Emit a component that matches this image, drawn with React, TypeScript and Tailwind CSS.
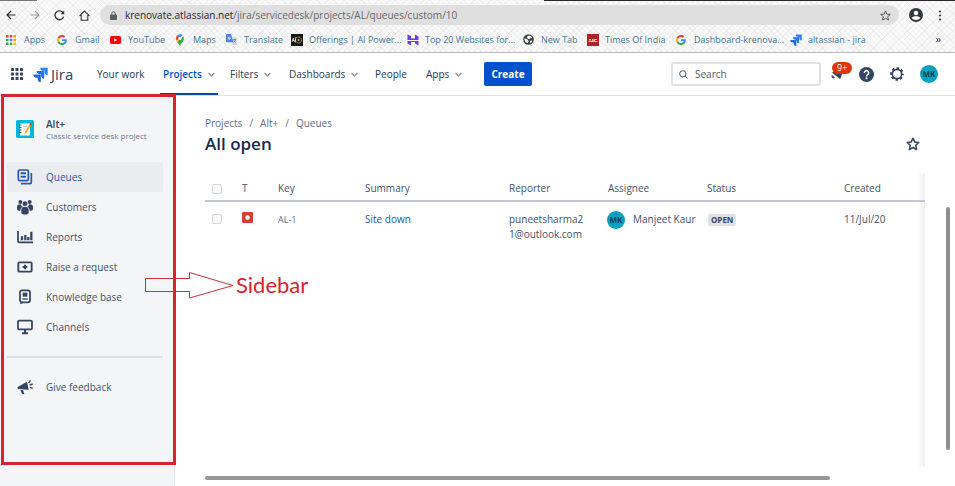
import type { ReactNode } from "react";

function GoogleIcon() {
  return (
    <svg viewBox="0 0 48 48" className="size-[10px] shrink-0" aria-hidden="true">
      <path fill="#ea4335" d="M24 9.500c3.500 0 6.700 1.200 9.200 3.600l6.900-6.900C35.900 2.400 30.500 0 24 0 14.600 0 6.500 5.400 2.600 13.200l8 6.200C12.400 13.700 17.700 9.500 24 9.500z" />
      <path fill="#4285f4" d="M47 24.600c0-1.600-.2-3.100-.4-4.600H24v9h12.900c-.6 3-2.300 5.500-4.800 7.200l7.700 6C44.400 38 47 31.800 47 24.600z" />
      <path fill="#fbbc05" d="M10.500 28.600a14.500 14.500 0 0 1 0-9.200l-8-6.200a24 24 0 0 0 0 21.600z" />
      <path fill="#34a853" d="M24 48c6.500 0 11.900-2.100 15.900-5.800l-7.700-6c-2.200 1.500-4.900 2.300-8.200 2.300-6.300 0-11.600-4.200-13.500-9.900l-8 6.200C6.500 42.600 14.600 48 24 48z" />
    </svg>
  );
}

function JiraMark({ className }: { className: string }) {
  return (
    <svg viewBox="0 0 24 24" className={className} aria-hidden="true">
      <path fill="#2684ff" d="M23 1H11.500a5 5 0 0 0 5 5h2v2a5 5 0 0 0 5 5V1z" />
      <path fill="#2171ea" d="M17.500 6.500H6a5 5 0 0 0 5 5h2v2a5 5 0 0 0 5 5V6.500z" />
      <path fill="#1f68dd" d="M12 12H.5a5 5 0 0 0 5 5h2v2a5 5 0 0 0 5 5V12z" />
    </svg>
  );
}

const appColors = ["#ea4335", "#ea4335", "#f29900", "#34a853", "#4285f4", "#f29900", "#34a853", "#34a853", "#fbbc05"];

function DotGrid({ colors, className }: { colors: string[]; className: string }) {
  return (
    <svg viewBox="0 0 12 12" className={className} aria-hidden="true">
      {colors.map((c, i) => (
        <rect key={i} x={(i % 3) * 4.5} y={Math.floor(i / 3) * 4.5} width="3" height="3" rx="0.6" fill={c} />
      ))}
    </svg>
  );
}

const bookmarks: { label: string; width: string; icon: ReactNode }[] = [
  { label: "Apps", width: "w-[51px]", icon: <DotGrid colors={appColors} className="size-[10px] shrink-0" /> },
  { label: "Gmail", width: "w-[53px]", icon: <GoogleIcon /> },
  {
    label: "YouTube",
    width: "w-[65px]",
    icon: (
      <svg viewBox="0 0 22 16" className="h-2 w-[11px] shrink-0" aria-hidden="true">
        <rect width="22" height="16" rx="3.5" fill="#f00" />
        <path d="M8.500 4.500v7l6-3.500z" fill="#fff" />
      </svg>
    ),
  },
  {
    label: "Maps",
    width: "w-[51px]",
    icon: (
      <svg viewBox="0 0 20 26" className="h-3 w-[10px] shrink-0" aria-hidden="true">
        <path d="M10 26C9 20 2 16 1.500 9.500L10 9z" fill="#fbbc04" />
        <path d="M10 26c1-6 8.500-9 8.500-16.500L17 5 4 18c3 3 5 4 6 8z" fill="#34a853" />
        <path d="M10 .5a9 9 0 0 0-7 3.300l6 5.700 7-8A9 9 0 0 0 10 .5z" fill="#4285f4" />
        <path d="M3 3.800A9 9 0 0 0 2.500 14L9 8.500z" fill="#ea4335" />
        <circle cx="10" cy="9.5" r="3.5" fill="#fff" />
      </svg>
    ),
  },
  {
    label: "Translate",
    width: "w-[65px]",
    icon: (
      <svg viewBox="0 0 24 24" className="size-[11px] shrink-0" aria-hidden="true">
        <path d="M10 7h12a2 2 0 0 1 2 2v13a2 2 0 0 1-2 2h-8z" fill="#d5d9df" />
        <path d="M2 0h9l5 18H2a2 2 0 0 1-2-2V2a2 2 0 0 1 2-2z" fill="#4a84e8" />
        <path d="M11 9H7.500v1.600H9.200A2.600 2.600 0 1 1 8.800 7" fill="none" stroke="#fff" strokeWidth="1.5" />
        <path d="M15 12h7M18.500 10.500V12M21 12c-.5 3-3 5.500-5 6.500M16.500 13.500c1 2.500 3 4 5 5" fill="none" stroke="#5a6f91" strokeWidth="1.4" />
      </svg>
    ),
  },
  {
    label: "Offerings | AI Power...",
    width: "w-[116px]",
    icon: (
      <svg viewBox="0 0 24 24" className="size-3 shrink-0" aria-hidden="true">
        <rect width="24" height="24" fill="#171412" />
        <circle cx="15" cy="12" r="6" fill="none" stroke="#d8c9a0" strokeWidth="2" strokeDasharray="3 1.5" />
        <circle cx="15" cy="12" r="2" fill="#e6cf8c" />
        <path d="M2 16l2.500-8L7 16M3 13h4M9 7v10" stroke="#e9e4da" strokeWidth="1.6" fill="none" />
      </svg>
    ),
  },
  {
    label: "Top 20 Websites for...",
    width: "w-[116px]",
    icon: (
      <svg viewBox="0 0 24 24" className="size-3 shrink-0" aria-hidden="true">
        <path d="M1 1l7 3v5h8V1l7 4v7H1zM1 14h22v9l-7-4v-3H8v7l-7-4z" fill="#673de6" />
      </svg>
    ),
  },
  {
    label: "New Tab",
    width: "w-16",
    icon: (
      <svg viewBox="0 0 24 24" className="size-[11px] shrink-0" aria-hidden="true">
        <circle cx="12" cy="12" r="11.5" fill="#3c4043" />
        <path d="M3 10c3-1 6 1 8 3s1 4-1 7c-4-1-7-5-7-10zM12 3c4 0 7 2 8 5-2 1-4 0-5 2s-5 0-6-2 1-4 3-5zM15 15l5-1c0 3-2 5-4 6z" fill="#fff" />
      </svg>
    ),
  },
  {
    label: "Times Of India",
    width: "w-[89px]",
    icon: (
      <svg viewBox="0 0 24 24" className="size-3 shrink-0" aria-hidden="true">
        <rect width="24" height="24" fill="#b3201d" />
        <path d="M3 15h18M4 11h4M6 11v4M10 15l1.500-5 1.500 5M15 15v-4h5" stroke="#f9dcd9" strokeWidth="1.8" fill="none" />
      </svg>
    ),
  },
  { label: "Dashboard-krenova...", width: "w-[114px]", icon: <GoogleIcon /> },
  { label: "altassian - jira", width: "w-[90px]", icon: <JiraMark className="size-3 shrink-0" /> },
];

function BrowserBar() {
  return (
    <div className="border-b border-[#b9b9b9] bg-[#fafafa] bg-[repeating-linear-gradient(45deg,#0000000a_0_1px,transparent_1px_4px),repeating-linear-gradient(-45deg,#0000000a_0_1px,transparent_1px_4px)]">
      <div className="flex h-px justify-between">
        <span className="w-[37px] bg-[#777]" />
        <span className="w-[43%] bg-[#2b2527]" />
      </div>
      <div className="flex h-7 items-center pr-2 pl-[6px]">
        <div className="flex w-[94px] items-center gap-[14px] text-[#2f3235]">
          <button aria-label="Back">
            <svg viewBox="0 0 20 20" className="size-[10px]" fill="none" stroke="currentColor" strokeWidth="2.4"><path d="M19 10H2M10 2l-8 8 8 8" /></svg>
          </button>
          <button aria-label="Forward" className="text-[#9b9b9b]">
            <svg viewBox="0 0 20 20" className="size-[10px]" fill="none" stroke="currentColor" strokeWidth="2.2"><path d="M1 10h17M10 2l8 8-8 8" /></svg>
          </button>
          <button aria-label="Reload">
            <svg viewBox="0 0 20 20" className="size-[11px]" fill="none" stroke="currentColor" strokeWidth="2.4"><path d="M17.500 12A8 8 0 1 1 16 4.500l1.500 2" /><path d="M18.500 1v6.500H12z" fill="currentColor" stroke="none" /></svg>
          </button>
          <button aria-label="Home">
            <svg viewBox="0 0 20 20" className="size-[11px]" fill="none" stroke="currentColor" strokeWidth="2"><path d="M1 10.500L10 2l9 8.500M4 9v9.500h12V9" /></svg>
          </button>
        </div>
        <div className="flex h-5 flex-1 items-center rounded-full bg-[#dfdfe0] pr-2 pl-[10px]">
          <svg viewBox="0 0 14 18" className="h-[9px] w-[7px]" aria-hidden="true">
            <rect y="7" width="14" height="11" rx="1.5" fill="#5c5f62" />
            <path d="M3.500 8V5a3.500 3.500 0 0 1 7 0v3" fill="none" stroke="#5c5f62" strokeWidth="2" />
          </svg>
          <span className="ml-2 flex-1 text-[10px] text-[#65686c]">
            <span className="text-[#25282c]">krenovate.atlassian.net</span>/jira/servicedesk/projects/AL/queues/custom/10
          </span>
          <button aria-label="Bookmark this page">
            <svg viewBox="0 0 24 24" className="size-[11px]" fill="none" stroke="#4a4d50" strokeWidth="2"><path d="M12 2l3 7 7.500.6-5.700 5 1.800 7.400-6.600-4-6.600 4 1.800-7.400-5.700-5L9 9z" /></svg>
          </button>
        </div>
        <button aria-label="Profile" className="ml-[10px]">
          <svg viewBox="0 0 24 24" className="size-[14px]"><circle cx="12" cy="12" r="12" fill="#37393c" /><circle cx="12" cy="8.5" r="3.8" fill="#fff" /><path d="M4.500 17c2-4 13-4 15 0-3 4.500-12 4.500-15 0z" fill="#fff" /></svg>
        </button>
        <button aria-label="Menu" className="ml-[10px]">
          <svg viewBox="0 0 14 22" className="h-[11px] w-[14px]" fill="#37393c"><circle cx="7" cy="3" r="2.2" /><circle cx="7" cy="11" r="2.2" /><circle cx="7" cy="19" r="2.2" /></svg>
        </button>
      </div>
      <div className="flex h-[23px] items-center pb-[2px] pl-[6px] text-[9px] text-[#3d7898]">
        {bookmarks.map((b) => (
          <a key={b.label} href="#" className={`flex shrink-0 items-center whitespace-nowrap ${b.width}`}>
            <span className="flex w-[18px] shrink-0">{b.icon}</span>
            {b.label}
          </a>
        ))}
        <button aria-label="More bookmarks" className="mr-[14px] ml-auto text-[11px] text-[#333]">»</button>
      </div>
    </div>
  );
}

function Chevron() {
  return (
    <svg viewBox="0 0 12 8" className="ml-[6px] h-[5px] w-[7px]" fill="none" stroke="#8a909c" strokeWidth="2.4" aria-hidden="true">
      <path d="M1 1.500l5 5 5-5" />
    </svg>
  );
}

const navItems = [
  { label: "Your work", width: "w-[66px]", menu: false },
  { label: "Projects", width: "w-[67px]", menu: true },
  { label: "Filters", width: "w-[59px]", menu: true },
  { label: "Dashboards", width: "w-[86px]", menu: true },
  { label: "People", width: "w-[51px]", menu: false },
  { label: "Apps", width: "w-[58px]", menu: true },
];

const gridColors = Array<string>(9).fill("#344563");

function Header() {
  return (
    <header className="flex h-[43px] shrink-0 items-center border-b border-[#dcdee2] pr-[17px] pl-[11px]">
      <button aria-label="Switch to" className="shrink-0"><DotGrid colors={gridColors} className="size-3" /></button>
      <a href="#" className="ml-[10px] flex w-[64px] shrink-0 items-center text-[15px] leading-5 text-[#344563]">
        <JiraMark className="mr-[3px] size-[15px]" />
        Jira
      </a>
      <nav className="flex self-stretch text-[10px] font-medium text-[#253858]">
        {navItems.map((n) => (
          <a key={n.label} href="#" className={`flex shrink-0 whitespace-nowrap ${n.width}`}>
            <span className={`flex items-center border-y-2 border-transparent ${n.label === "Projects" ? "-mx-[3px] border-b-[#0747a6] px-[3px] font-semibold text-[#0052cc]" : ""}`}>
              {n.label}
              {n.menu && <Chevron />}
            </span>
          </a>
        ))}
      </nav>
      <button className="h-6 w-12 shrink-0 rounded-[2px] bg-[#0052cc] text-[10px] font-bold text-white">Create</button>
      <label className="mr-[10px] ml-auto flex h-6 w-[150px] items-center rounded-[3px] border-2 border-[#dfe1e6] px-[6px]">
        <svg viewBox="0 0 20 20" className="size-[9px] shrink-0" fill="none" stroke="#42526e" strokeWidth="2.2" aria-hidden="true"><circle cx="8.5" cy="8.5" r="7" /><path d="M13.500 13.500L19 19" /></svg>
        <input aria-label="Search" placeholder="Search" className="ml-[7px] w-full min-w-0 text-[10px] outline-none placeholder:text-[#505b6b]" />
      </label>
      <button aria-label="Notifications, 9 or more" className="relative flex h-6 w-7 items-center">
        <svg viewBox="0 0 24 24" className="size-3" fill="#344563"><path d="M14 2l9 9c-3 3-1 6-5 11L2 9c5-4 8-3 12-7z" /><path d="M2 14l6 5a3.500 3.500 0 0 1-6-5z" /></svg>
        <span className="absolute top-0 left-px rounded-full bg-[#de350b] px-[5px] text-[9px] leading-3 text-white">9+</span>
      </button>
      <button aria-label="Help">
        <svg viewBox="0 0 24 24" className="size-[15px]"><circle cx="12" cy="12" r="12" fill="#344563" /><path d="M8.500 9.500a3.500 3.500 0 1 1 5.500 2.700c-1.300.9-2 1.300-2 2.800" fill="none" stroke="#fff" strokeWidth="2.4" /><circle cx="12" cy="18" r="1.5" fill="#fff" /></svg>
      </button>
      <button aria-label="Settings" className="ml-4">
        <svg viewBox="0 0 24 24" className="size-[14px]" fill="none" stroke="#344563"><circle cx="12" cy="12" r="8" strokeWidth="2.8" /><circle cx="12" cy="12" r="10.2" strokeWidth="3" strokeDasharray="4.4 3.61" strokeDashoffset="2.2" /></svg>
      </button>
      <button aria-label="Your profile" className="ml-4 size-[18px] rounded-full bg-[#00a3bf] text-[8px] font-bold text-[#123e57]">MK</button>
    </header>
  );
}

const sideItems: { label: string; icon: ReactNode }[] = [
  {
    label: "Queues",
    icon: (
      <>
        <rect x="2" y="1.5" width="15" height="16" rx="2" fill="none" stroke="currentColor" strokeWidth="2.6" />
        <path d="M5.500 6.500h8M5.500 11.500h8" stroke="currentColor" strokeWidth="3" />
        <path d="M21.500 6v14a2 2 0 0 1-2 2H6" fill="none" stroke="currentColor" strokeWidth="2.6" />
      </>
    ),
  },
  {
    label: "Customers",
    icon: (
      <g fill="currentColor">
        <circle cx="5" cy="4.5" r="3" /><circle cx="19" cy="4.5" r="3" /><circle cx="12" cy="7" r="3.6" />
        <path d="M0 12c0-3 2-4 5-4 1.500 1 1.500 3 3.500 4C5.500 13.500 5 15 5 18 2 18 0 17 0 15zM24 12c0-3-2-4-5-4-1.500 1-1.500 3-3.500 4 3 1.500 3.500 3 3.500 6 3 0 5-1 5-3z" />
        <path d="M6.500 16c0-3 2.500-4.500 5.500-4.500s5.500 1.500 5.500 4.500v5c-1.500 3-9.500 3-11 0z" />
      </g>
    ),
  },
  {
    label: "Reports",
    icon: (
      <>
        <path d="M1.500 3v15a2 2 0 0 0 2 2H24" fill="none" stroke="currentColor" strokeWidth="2.6" />
        <path d="M7.500 11v6M12.500 9v8M17 12v5M21.500 4v13" stroke="currentColor" strokeWidth="3.4" />
      </>
    ),
  },
  {
    label: "Raise a request",
    icon: (
      <>
        <rect x="2" y="5" width="20" height="14" rx="1.5" fill="none" stroke="currentColor" strokeWidth="2.8" />
        <path d="M12 8.500v7M8.500 12h7" stroke="currentColor" strokeWidth="3" />
      </>
    ),
  },
  {
    label: "Knowledge base",
    icon: (
      <>
        <rect x="4.5" y="2" width="15" height="18" rx="3" fill="none" stroke="currentColor" strokeWidth="2.6" />
        <rect x="8.5" y="5.5" width="7" height="6" fill="currentColor" />
        <path d="M8 15h8" stroke="currentColor" strokeWidth="2" />
        <path d="M5 19v4l4-2" fill="currentColor" />
      </>
    ),
  },
  {
    label: "Channels",
    icon: (
      <>
        <rect x="1.5" y="2.5" width="21" height="13" rx="1.5" fill="none" stroke="currentColor" strokeWidth="2.6" />
        <path d="M12 16v4M7.500 21.500h9" stroke="currentColor" strokeWidth="3" />
      </>
    ),
  },
];

function SideLink({ label, icon, active = false }: { label: string; icon: ReactNode; active?: boolean }) {
  return (
    <a href="#" className={`flex h-[30px] items-center rounded-[2px] pl-[10px] ${active ? "bg-[#ebecf0] text-[#2458a8]" : "text-[#42526e]"}`}>
      <svg viewBox="0 0 24 24" className={`mr-[13px] size-4 ${active ? "text-[#2458b8]" : "text-[#344563]"}`} aria-hidden="true">{icon}</svg>
      {label}
    </a>
  );
}

function Sidebar() {
  return (
    <aside className="w-[175px] shrink-0 border-r border-[#dfe1e6] bg-[#f4f5f7] pr-[11px] pl-[7px] text-[10px]">
      <div className="flex h-[66px] items-center pl-[9px]">
        <svg viewBox="0 0 36 36" className="size-[18px] shrink-0" aria-hidden="true">
          <rect width="36" height="36" rx="3" fill="#00b8d9" />
          <rect x="8" y="7" width="20" height="24" rx="1" fill="#fff" />
          <path d="M6 10h5M6 15h5M6 20h5M6 25h5" stroke="#3b5060" strokeWidth="2" />
          <path d="M14 13h8M14 18h5" stroke="#b9c4cc" strokeWidth="2" />
          <path d="M27 9l3 2-9 15-4 2 1-5z" fill="#ffab00" />
          <path d="M27 9l3 2 1.500-2.500-3-2z" fill="#de350b" />
        </svg>
        <div className="ml-3 whitespace-nowrap">
          <p className="leading-3 font-semibold text-[#344563]">Alt+</p>
          <p className="text-[8px] leading-[11px] text-[#6b778c]">Classic service desk project</p>
        </div>
      </div>
      <nav>
        {sideItems.map((s) => (
          <SideLink key={s.label} {...s} active={s.label === "Queues"} />
        ))}
        <hr className="my-[14px] border-t-2 border-[#dfe1e6]" />
        <SideLink
          label="Give feedback"
          icon={
            <>
              <path d="M1 12L15 4l2.500 12L1 15zM5 17l4-.5 2 6-3 .5z" fill="currentColor" />
              <path d="M17.500 6L20 2M19 9l4.500-1.500M19.500 12.500l4 1.500" stroke="currentColor" strokeWidth="2.2" />
            </>
          }
        />
      </nav>
    </aside>
  );
}

const checkbox = "block size-[10px] appearance-none rounded-[2px] border border-[#d3d7de] bg-[#fafbfc]";

function Content() {
  return (
    <main className="flex min-w-0 flex-1 flex-col pl-[30px]">
      <div className="flex flex-1">
        <div className="min-w-0 flex-1">
          <ol className="mt-5 flex gap-[7px] text-[10px] leading-[14px] text-[#5e6c84]">
            <li><a href="#">Projects</a></li>
            <li aria-hidden="true">/</li>
            <li><a href="#">Alt+</a></li>
            <li aria-hidden="true">/</li>
            <li><a href="#">Queues</a></li>
          </ol>
          <div className="flex items-center justify-between pr-[5px]">
            <h1 className="text-[17px] leading-7 font-semibold text-[#172b4d]">All open</h1>
            <button aria-label="Star this queue">
              <svg viewBox="0 0 24 24" className="size-[14px]" fill="none" stroke="#344563" strokeWidth="2.6" strokeLinejoin="round"><path d="M12 2l3 6.500 7 .8-5.200 4.900 1.400 7.300L12 18l-6.200 3.500 1.400-7.300L2 9.300l7-.8z" /></svg>
            </button>
          </div>
          <div className="mt-[15px] h-[294px] bg-linear-to-l from-[#f0f0f0] to-transparent to-1%">
            <table className="w-full table-fixed text-left text-[10px] text-[#42526e]">
              <colgroup>
                <col className="w-[37px]" />
                <col className="w-9" />
                <col className="w-[87px]" />
                <col />
                <col className="w-[99px]" />
                <col className="w-[99px]" />
                <col className="w-[137px]" />
                <col className="w-[81px]" />
              </colgroup>
              <thead>
                <tr className="h-7 border-b-2 border-[#c1c7d0] [&>th]:pt-1 [&>th]:font-normal">
                  <th className="pl-[7px]"><input type="checkbox" aria-label="Select all" className={checkbox} /></th>
                  <th>T</th>
                  <th>Key</th>
                  <th>Summary</th>
                  <th>Reporter</th>
                  <th>Assignee</th>
                  <th>Status</th>
                  <th>Created</th>
                </tr>
              </thead>
              <tbody>
                <tr className="align-top [&>td]:pt-[10px] [&>td]:leading-[15px]">
                  <td className="pl-[7px]"><input type="checkbox" aria-label="Select AL-1" className={`${checkbox} mt-[2px]`} /></td>
                  <td>
                    <svg viewBox="0 0 22 22" className="size-[11px]" role="img" aria-label="Incident"><rect width="22" height="22" rx="2.5" fill="#d63f30" /><circle cx="11" cy="11" r="4.5" fill="#fff" /></svg>
                  </td>
                  <td className="text-[9px] text-[#5e6c84]">AL-1</td>
                  <td><a href="#" className="text-[#1a56a0]">Site down</a></td>
                  <td>puneetsharma2<br />1@outlook.com</td>
                  <td className="whitespace-nowrap">
                    <div className="flex items-center">
                      <span className="-my-[2px] mr-2 -ml-px flex size-[18px] shrink-0 items-center justify-center rounded-full bg-[#00a3bf] text-[8px] font-bold text-[#123e57]">MK</span>
                      Manjeet Kaur
                    </div>
                  </td>
                  <td><span className="ml-px inline-block rounded-[2px] bg-[#dfe1e6] px-[3px] text-[8px] leading-3 font-bold text-[#344563]">OPEN</span></td>
                  <td>11/Jul/20</td>
                </tr>
              </tbody>
            </table>
          </div>
        </div>
        <div className="flex w-[30px] shrink-0 justify-end pt-[111px] pr-[5px] pb-[26px]">
          <div className="w-1 rounded-full bg-[#8f8f8f]" />
        </div>
      </div>
      <div className="mb-[6px] h-1 w-5/6 rounded-full bg-[#979797]" />
    </main>
  );
}

function Annotations() {
  return (
    <>
      <div className="pointer-events-none absolute top-[94px] left-px h-[371px] w-[175px] border-[3px] border-[#d9232e]" />
      <div className="pointer-events-none absolute top-[271px] left-[145px] flex items-center font-['Lato',sans-serif] text-[22px] leading-7 text-[#d9232e]">
        <svg viewBox="0 0 89 28" className="h-7 w-[89px]" fill="none" stroke="#c8323a" aria-hidden="true">
          <path d="M.5 7.500H44.500V1.500L88 14.500 44.500 27V20.500H.5z" />
        </svg>
        <span className="ml-[2px]">Sidebar</span>
      </div>
    </>
  );
}

export default function App() {
  return (
    <div className="relative flex min-h-screen flex-col overflow-hidden bg-white font-['Open_Sans','Noto_Sans',sans-serif]">
      <BrowserBar />
      <Header />
      <div className="flex flex-1">
        <Sidebar />
        <Content />
      </div>
      <Annotations />
    </div>
  );
}
